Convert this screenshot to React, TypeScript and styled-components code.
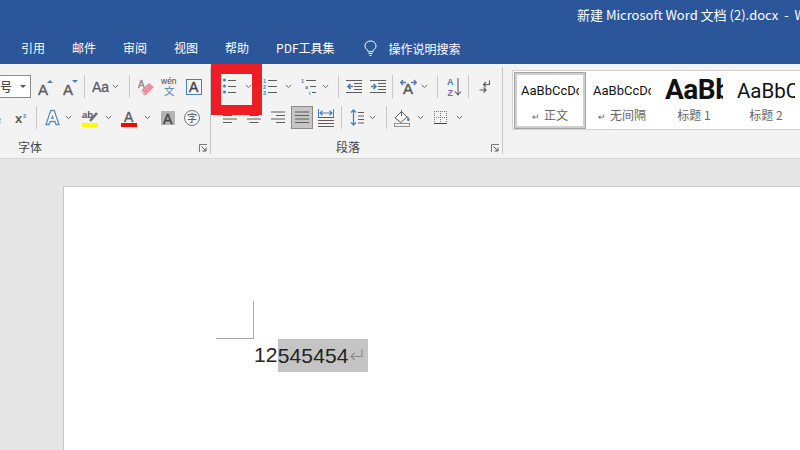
import { ReactNode } from "react";
import styled, { createGlobalStyle } from "styled-components";

const GlobalStyle = createGlobalStyle`
    html, body {
        margin: 0;
        padding: 0;
        background: #e6e6e6;
    }
    * {
        box-sizing: border-box;
    }
`;

const BLUE = "#4a80b8";
const DARK = "#5c5c5c";
const CJK = `"Noto Sans CJK SC", "Liberation Sans", sans-serif`;
const LATIN = `"Liberation Sans", "Noto Sans CJK SC", sans-serif`;

const Screen = styled.div`
    position: relative;
    width: 800px;
    height: 450px;
    overflow: hidden;
    display: flex;
    flex-direction: column;
    background: #e6e6e6;
    font-family: ${CJK};
`;

const TitleBar = styled.header`
    height: 64px;
    flex: none;
    background: #2b579a;
    color: #fff;
    display: flex;
    flex-direction: column;
`;

const WindowTitle = styled.div`
    height: 36px;
    padding: 6px 0 0 577px;
    font-size: 13px;
    line-height: 18px;
    white-space: pre;
    overflow: hidden;
`;

const Tabs = styled.nav`
    display: flex;
    align-items: center;
    height: 24px;
    padding-left: 21px;
    gap: 27px;
    font-size: 12px;
`;

const Tab = styled.span`
    white-space: nowrap;
    line-height: 24px;
`;

const SearchHint = styled.span`
    display: flex;
    align-items: center;
    gap: 12px;
    margin-left: 2px;
    white-space: nowrap;
`;

const Ribbon = styled.section`
    height: 95px;
    flex: none;
    display: flex;
    background: #f3f3f3;
    border-bottom: 1px solid #d6d6d6;
`;

const Group = styled.div<{ $w: number }>`
    width: ${(p) => p.$w}px;
    flex: none;
    display: flex;
    flex-direction: column;
    padding-top: 7px;
    overflow: hidden;
`;

const GroupLine = styled.div`
    width: 1px;
    flex: none;
    margin: 3px 0 4px;
    background: #c6c6c6;
`;

const ToolRow = styled.div`
    height: 31px;
    display: flex;
    align-items: center;
    flex: none;
`;

const Tool = styled.span<{ $w: number; $ml?: number }>`
    width: ${(p) => p.$w}px;
    margin-left: ${(p) => p.$ml ?? 0}px;
    height: 24px;
    flex: none;
    display: flex;
    align-items: center;
    justify-content: center;
`;

const ToolSep = styled.span<{ $ml: number }>`
    width: 1px;
    height: 23px;
    flex: none;
    margin-left: ${(p) => p.$ml}px;
    background: #c8c8c8;
`;

const SizeSelect = styled.div`
    width: 32px;
    height: 23px;
    margin-left: -1px;
    flex: none;
    display: flex;
    align-items: center;
    justify-content: space-between;
    padding: 0 4px 0 0;
    background: #fff;
    border: 1px solid #8a8a8a;
    font-size: 12px;
    color: #222;
`;

const CaretDown = styled.span`
    width: 0;
    height: 0;
    border-left: 3px solid transparent;
    border-right: 3px solid transparent;
    border-top: 3px solid #555;
`;

const ActiveTool = styled(Tool)`
    height: 23px;
    background: #c6c6c6;
    border: 1px solid #8a8a8a;
`;

const GroupFooter = styled.div<{ $pl: number }>`
    display: flex;
    align-items: center;
    height: 24px;
    margin-top: 2px;
    padding: 0 3px 0 ${(p) => p.$pl}px;
`;

const GroupLabel = styled.span`
    font-size: 12px;
    line-height: 20px;
    color: #444;
`;

const Launcher = styled.span`
    margin-left: auto;
    display: flex;
    padding-top: 2px;
`;

const StylesPane = styled.div`
    flex: 1;
    padding: 6px 0 0 9px;
    min-width: 0;
`;

const Gallery = styled.div`
    height: 60px;
    display: flex;
    padding: 1px;
    background: #fff;
    border: 1px solid #d2d2d2;
    border-right: none;
    overflow: hidden;
`;

const StyleCard = styled.div<{ $selected?: boolean }>`
    width: 72px;
    flex: none;
    height: 57px;
    display: flex;
    flex-direction: column;
    align-items: center;
    padding-top: ${(p) => (p.$selected ? 2 : 5)}px;
    border: ${(p) => (p.$selected ? "3px solid #cfcfcf" : "none")};
    outline: ${(p) => (p.$selected ? "1px solid #a5a5a5" : "none")};
    outline-offset: -1px;
`;

const StylePreview = styled.div<{ $size: number; $bold?: boolean }>`
    width: 58px;
    height: 28px;
    overflow: hidden;
    white-space: nowrap;
    color: #111;
    font-family: Roboto, ${LATIN};
    font-size: ${(p) => p.$size}px;
    font-weight: ${(p) => (p.$bold ? 700 : 400)};
    letter-spacing: ${(p) => (p.$bold ? "-0.5px" : "0")};
    line-height: ${(p) => (p.$bold ? 26 : 28)}px;
`;

const StyleName = styled.div`
    margin-top: 2px;
    font-size: 12px;
    line-height: 16px;
    color: #666;
    white-space: nowrap;
`;

const ParaMark = styled.span`
    font-size: 9px;
    color: #666;
    margin-right: 4px;
    font-family: ${LATIN};
`;

const Canvas = styled.main`
    flex: 1;
    padding: 27px 0 0 63px;
    min-height: 0;
`;

const Page = styled.article`
    width: 760px;
    height: 300px;
    padding: 114px 0 0 152px;
    background: #fff;
    border-left: 1px solid #c8c8c8;
    border-top: 1px solid #c8c8c8;
`;

const CropMark = styled.div`
    width: 38px;
    height: 38px;
    border-right: 1px solid #a8a8a8;
    border-bottom: 1px solid #a8a8a8;
`;

const BodyLine = styled.p`
    margin: 0 0 0 38px;
    display: flex;
    height: 33px;
    font-family: ${LATIN};
    font-size: 21px;
    letter-spacing: 0.15px;
    line-height: 31px;
    color: #222;
    white-space: pre;
`;

const Selected = styled.span`
    display: flex;
    align-items: center;
    height: 33px;
    background: #c4c4c4;
`;

const HighlightFrame = styled.div`
    position: absolute;
    left: 211px;
    top: 64px;
    width: 51px;
    height: 51px;
    border: 10px solid #ee1c25;
`;

const GlyphText = styled.text<{ $weight?: number }>`
    font-family: ${LATIN};
    font-weight: ${(p) => p.$weight ?? 700};
`;

function Svg({ w, h, children }: { w: number; h: number; children: ReactNode }) {
    return (
        <svg width={w} height={h} viewBox={`0 0 ${w} ${h}`} fill="none">
            {children}
        </svg>
    );
}

function Chevron() {
    return (
        <Svg w={7} h={5}>
            <path d="M.8 1l2.7 2.6L6.2 1" stroke="#666" strokeWidth="1" />
        </Svg>
    );
}

function Lines({ x, ys, w, color = DARK }: { x: number; ys: number[]; w: number; color?: string }) {
    return (
        <>
            {ys.map((y) => (
                <path key={y} d={`M${x} ${y + 0.5}h${w}`} stroke={color} />
            ))}
        </>
    );
}

function LetterA({ x = 0, y = 15, size = 15, fill = DARK }: { x?: number; y?: number; size?: number; fill?: string }) {
    return (
        <GlyphText x={x} y={y} fontSize={size} fill={fill} stroke={fill} strokeWidth={0.4} $weight={400}>
            A
        </GlyphText>
    );
}

function GrowFont({ down }: { down?: boolean }) {
    return (
        <Svg w={15} h={18}>
            <LetterA x={0} y={17} size={15} />
            <path d={down ? "M9 2h6l-3 3z" : "M9 5h6l-3-3z"} fill={BLUE} />
        </Svg>
    );
}

function Eraser() {
    return (
        <Svg w={16} h={17}>
            <LetterA x={0} y={10} size={10} fill="#888" />
            <path d="M3 12.500L11 5l5 4-8 8H6z" fill="#ef8ea3" />
            <path d="M3.500 12.500L7 16" stroke="#fff" />
        </Svg>
    );
}

function Phonetic() {
    return (
        <Svg w={17} h={19}>
            <GlyphText x={0} y={7} fontSize={8.500} fill="#444" $weight={400}>
                wén
            </GlyphText>
            <GlyphText x={3} y={18} fontSize={10.500} fill={BLUE} $weight={400}>
                文
            </GlyphText>
        </Svg>
    );
}

function BoxedA() {
    return (
        <Svg w={16} h={16}>
            <rect x=".5" y=".5" width="15" height="15" stroke={BLUE} />
            <LetterA x={3} y={13} size={14} fill="#444" />
        </Svg>
    );
}

function TextEffect() {
    return (
        <Svg w={15} h={17}>
            <path d="M5.800 1.500h3.400L14 15.500h-3l-1-3H5l-1 3H1z" fill="#fff" stroke="#5b8dc4" strokeWidth="1.300" />
            <path d="M6 10l1.500-4.500L9 10z" fill="#5b8dc4" />
        </Svg>
    );
}

function HighlightIcon() {
    return (
        <Svg w={16} h={18}>
            <GlyphText x={0} y={9} fontSize={9.500} fill="#555">
                ab
            </GlyphText>
            <path d="M8 12l7-8" stroke="#6f6f6f" strokeWidth="2.500" />
            <rect y="14" width="16" height="4" fill="#ffff00" />
        </Svg>
    );
}

function FontColor() {
    return (
        <Svg w={16} h={18}>
            <LetterA x={3} y={12.500} size={14} />
            <rect y="14" width="16" height="4" fill="#ff0000" />
        </Svg>
    );
}

function ShadedA() {
    return (
        <Svg w={14} h={14}>
            <rect width="14" height="14" fill="#b4b4b4" />
            <LetterA x={2} y={12.500} size={14} fill="#444" />
        </Svg>
    );
}

function Bullets() {
    return (
        <Svg w={14} h={17}>
            {[2, 8, 14].map((y) => (
                <g key={y}>
                    <circle cx="1.500" cy={y} r="1.500" fill={BLUE} />
                    <path d={`M5 ${y + 0.5}h8`} stroke={DARK} />
                </g>
            ))}
        </Svg>
    );
}

function Numbering() {
    return (
        <Svg w={15} h={17}>
            {["1", "2", "3"].map((n, i) => (
                <g key={n}>
                    <GlyphText x={0} y={4.500 + i * 6} fontSize={5.500} fill={BLUE}>
                        {n}
                    </GlyphText>
                    <path d={`M5 ${2.500 + i * 6}h9`} stroke={DARK} />
                </g>
            ))}
        </Svg>
    );
}

function Multilevel() {
    return (
        <Svg w={16} h={17}>
            <GlyphText x={0} y={5} fontSize={5.500} fill={BLUE}>
                1
            </GlyphText>
            <path d="M5 2.500h10" stroke={DARK} />
            <GlyphText x={4} y={11} fontSize={5.500} fill={BLUE}>
                a
            </GlyphText>
            <path d="M9 8.500h6" stroke={DARK} />
            <GlyphText x={8} y={17} fontSize={5.500} fill={BLUE}>
                i
            </GlyphText>
            <path d="M11 14.500h4" stroke={DARK} />
        </Svg>
    );
}

function IndentIcon({ out }: { out?: boolean }) {
    const arrow = out ? "M7 7.500H2M4.500 5L2 7.500 4.500 10" : "M1 7.500h5M3.500 5L6 7.500 3.500 10";
    return (
        <Svg w={16} h={15}>
            <Lines x={0} ys={[1, 13]} w={16} />
            <Lines x={8} ys={[4, 7, 10]} w={8} />
            <path d={arrow} stroke={BLUE} strokeWidth="1.700" />
        </Svg>
    );
}

function TextDirection() {
    return (
        <Svg w={17} h={17}>
            <path d="M1 4.500h5M3 2L.8 4.500 3 7M16 4.500h-5M14 2l2.200 2.500L14 7" stroke={BLUE} strokeWidth="1.400" />
            <LetterA x={3} y={16} size={15} fill="#555" />
        </Svg>
    );
}

function SortIcon() {
    return (
        <Svg w={15} h={20}>
            <GlyphText x={0} y={8} fontSize={9} fill={BLUE}>
                A
            </GlyphText>
            <GlyphText x={0.500} y={18.500} fontSize={9} fill="#9b59b6">
                Z
            </GlyphText>
            <path d="M11 1v17M8 14.500l3 3.500 3-3.500" stroke={DARK} strokeWidth="1.100" />
        </Svg>
    );
}

function ParagraphMarkIcon() {
    return (
        <Svg w={11} h={15}>
            <path d="M10.500 1.500v4H5M7 3L4.500 5.500 7 8" stroke={DARK} strokeWidth="1.200" />
            <path d="M.5 11h6M4.500 8.500L7 11l-2.500 2.500" stroke={DARK} strokeWidth="1.200" />
        </Svg>
    );
}

function AlignIcon({ mode }: { mode: "left" | "center" | "right" | "full" }) {
    const rows = [1, 4.500, 8, 11.500];
    const long = 14;
    return (
        <Svg w={14} h={13}>
            {rows.map((y, i) => {
                const w = mode === "full" || i % 2 === 0 ? long : 9;
                const x = mode === "center" ? (long - w) / 2 : mode === "right" ? long - w : 0;
                return <path key={y} d={`M${x} ${y}h${w}`} stroke={DARK} />;
            })}
        </Svg>
    );
}

function Distributed() {
    return (
        <Svg w={16} h={18}>
            <path d="M.5 0v8M15.500 0v8" stroke={BLUE} />
            <path d="M2 4h12M4.500 1.800L2 4l2.500 2.200M11.500 1.800L14 4l-2.500 2.200" stroke={BLUE} strokeWidth="1.200" />
            <Lines x={0} ys={[8, 11, 14, 17]} w={16} />
        </Svg>
    );
}

function LineSpacing() {
    return (
        <Svg w={14} h={17}>
            <path d="M3.500 1v15M1 3.500L3.500 1 6 3.500M1 13.500L3.500 16 6 13.500" stroke={BLUE} strokeWidth="1.300" />
            <Lines x={8} ys={[3, 6.500, 10, 13.500]} w={6} />
        </Svg>
    );
}

function Shading() {
    return (
        <Svg w={16} h={18}>
            <path d="M1 9l6.500-6.500L13 8l-6 5.500z" stroke={DARK} fill="#f8f8f8" />
            <path d="M7.500 1v6" stroke={DARK} />
            <path d="M13.500 7c1.500 2 2.500 3 2 4.500-.5 1-2 1-2.300-.2-.2-1.300 0-2.800.3-4.300z" fill={BLUE} />
            <rect x=".5" y="14.500" width="15" height="3" stroke="#8f8f8f" fill="#f3f3f3" />
        </Svg>
    );
}

function Borders() {
    return (
        <Svg w={13} h={13}>
            <path d="M.5 0v13M6.500 0v13M12.500 0v13M0 .5h13M0 6.500h13" stroke="#777" strokeDasharray="1 1" />
            <path d="M0 12.500h13" stroke="#444" />
        </Svg>
    );
}

function DialogLauncher() {
    return (
        <Svg w={8} h={8}>
            <path d="M.5 8V.5H8" stroke="#777" />
            <path d="M2.500 2.500L7 7M7 3.500V7H3.500" stroke="#555" />
        </Svg>
    );
}

function Bulb() {
    return (
        <Svg w={13} h={16}>
            <path d="M4 10.500C2.500 9.500 1 8 1 5.800 1 3 3.400 1 6.500 1S12 3 12 5.800c0 2.200-1.500 3.700-3 4.700v1.200H4z" stroke="#fff" />
            <path d="M4.500 13.500h4M5.500 15.500h2" stroke="#fff" />
        </Svg>
    );
}

function ReturnMark() {
    return (
        <Svg w={19} h={14}>
            <path d="M13 0v7.500H2M5.500 4L2 7.500 5.500 11" stroke="#8c8c8c" strokeWidth="1.200" />
        </Svg>
    );
}

const tabNames = ["引用", "邮件", "审阅", "视图", "帮助", "PDF工具集"];

const galleryItems = [
    { preview: "AaBbCcDdEe", size: 13, name: "正文", mark: true, selected: true },
    { preview: "AaBbCcDdEe", size: 13, name: "无间隔", mark: true },
    { preview: "AaBbC", size: 28, bold: true, name: "标题 1" },
    { preview: "AaBbCc", size: 20.5, name: "标题 2" },
];

export default function App() {
    return (
        <Screen>
            <GlobalStyle />
            <TitleBar>
                <WindowTitle>新建 Microsoft Word 文档 (2).docx  -  Word</WindowTitle>
                <Tabs>
                    {tabNames.map((name) => (
                        <Tab key={name}>{name}</Tab>
                    ))}
                    <SearchHint>
                        <Bulb />
                        操作说明搜索
                    </SearchHint>
                </Tabs>
            </TitleBar>
            <Ribbon>
                <Group $w={210}>
                    <ToolRow>
                        <SizeSelect>
                            号
                            <CaretDown />
                        </SizeSelect>
                        <Tool $w={15} $ml={7}><GrowFont /></Tool>
                        <Tool $w={15} $ml={10}><GrowFont down /></Tool>
                        <ToolSep $ml={6} />
                        <Tool $w={17} $ml={7}>
                            <Svg w={17} h={14}>
                                <GlyphText x={0} y={12} fontSize={14} fill={DARK} stroke={DARK} strokeWidth={0.3} $weight={400}>Aa</GlyphText>
                            </Svg>
                        </Tool>
                        <Tool $w={7} $ml={3}><Chevron /></Tool>
                        <ToolSep $ml={10} />
                        <Tool $w={16} $ml={8}><Eraser /></Tool>
                        <Tool $w={17} $ml={7}><Phonetic /></Tool>
                        <Tool $w={16} $ml={8}><BoxedA /></Tool>
                    </ToolRow>
                    <ToolRow>
                        <Tool $w={4}>
                            <Svg w={4} h={12}>
                                <GlyphText x={-3} y={11} fontSize={7} fill={BLUE}>2</GlyphText>
                            </Svg>
                        </Tool>
                        <Tool $w={12} $ml={11}>
                            <Svg w={12} h={12}>
                                <GlyphText x={0} y={11} fontSize={13} fill={DARK}>x</GlyphText>
                                <GlyphText x={8} y={6} fontSize={6} fill={BLUE}>2</GlyphText>
                            </Svg>
                        </Tool>
                        <ToolSep $ml={9} />
                        <Tool $w={15} $ml={8}><TextEffect /></Tool>
                        <Tool $w={7} $ml={5}><Chevron /></Tool>
                        <Tool $w={16} $ml={10}><HighlightIcon /></Tool>
                        <Tool $w={7} $ml={7}><Chevron /></Tool>
                        <Tool $w={16} $ml={9}><FontColor /></Tool>
                        <Tool $w={7} $ml={7}><Chevron /></Tool>
                        <Tool $w={14} $ml={10}><ShadedA /></Tool>
                        <Tool $w={16} $ml={9}>
                            <Svg w={16} h={16}>
                                <circle cx="8" cy="8" r="7.500" stroke="#777" />
                                <GlyphText x={3} y={12} fontSize={10} fill="#444" $weight={400}>字</GlyphText>
                            </Svg>
                        </Tool>
                    </ToolRow>
                    <GroupFooter $pl={18}>
                        <GroupLabel>字体</GroupLabel>
                        <Launcher><DialogLauncher /></Launcher>
                    </GroupFooter>
                </Group>
                <GroupLine />
                <Group $w={291}>
                    <ToolRow>
                        <Tool $w={14} $ml={12}><Bullets /></Tool>
                        <Tool $w={7} $ml={8}><Chevron /></Tool>
                        <Tool $w={15} $ml={11}><Numbering /></Tool>
                        <Tool $w={7} $ml={7}><Chevron /></Tool>
                        <Tool $w={16} $ml={9}><Multilevel /></Tool>
                        <Tool $w={7} $ml={5}><Chevron /></Tool>
                        <ToolSep $ml={9} />
                        <Tool $w={16} $ml={7}><IndentIcon out /></Tool>
                        <Tool $w={16} $ml={8}><IndentIcon /></Tool>
                        <ToolSep $ml={6} />
                        <Tool $w={17} $ml={7}><TextDirection /></Tool>
                        <Tool $w={7} $ml={4}><Chevron /></Tool>
                        <ToolSep $ml={9} />
                        <Tool $w={15} $ml={9}><SortIcon /></Tool>
                        <ToolSep $ml={6} />
                        <Tool $w={11} $ml={10}><ParagraphMarkIcon /></Tool>
                    </ToolRow>
                    <ToolRow>
                        <Tool $w={14} $ml={12}><AlignIcon mode="left" /></Tool>
                        <Tool $w={14} $ml={10}><AlignIcon mode="center" /></Tool>
                        <Tool $w={14} $ml={10}><AlignIcon mode="right" /></Tool>
                        <ActiveTool $w={22} $ml={6}><AlignIcon mode="full" /></ActiveTool>
                        <Tool $w={16} $ml={5}><Distributed /></Tool>
                        <ToolSep $ml={7} />
                        <Tool $w={14} $ml={8}><LineSpacing /></Tool>
                        <Tool $w={7} $ml={5}><Chevron /></Tool>
                        <ToolSep $ml={10} />
                        <Tool $w={16} $ml={7}><Shading /></Tool>
                        <Tool $w={7} $ml={7}><Chevron /></Tool>
                        <Tool $w={13} $ml={10}><Borders /></Tool>
                        <Tool $w={7} $ml={9}><Chevron /></Tool>
                    </ToolRow>
                    <GroupFooter $pl={125}>
                        <GroupLabel>段落</GroupLabel>
                        <Launcher><DialogLauncher /></Launcher>
                    </GroupFooter>
                </Group>
                <GroupLine />
                <StylesPane>
                    <Gallery>
                        {galleryItems.map((item) => (
                            <StyleCard key={item.name} $selected={item.selected}>
                                <StylePreview $size={item.size} $bold={item.bold}>
                                    {item.preview}
                                </StylePreview>
                                <StyleName>
                                    {item.mark && <ParaMark>↵</ParaMark>}
                                    {item.name}
                                </StyleName>
                            </StyleCard>
                        ))}
                    </Gallery>
                </StylesPane>
            </Ribbon>
            <Canvas>
                <Page>
                    <CropMark />
                    <BodyLine>
                        12
                        <Selected>
                            545454
                            <ReturnMark />
                        </Selected>
                    </BodyLine>
                </Page>
            </Canvas>
            <HighlightFrame />
        </Screen>
    );
}
